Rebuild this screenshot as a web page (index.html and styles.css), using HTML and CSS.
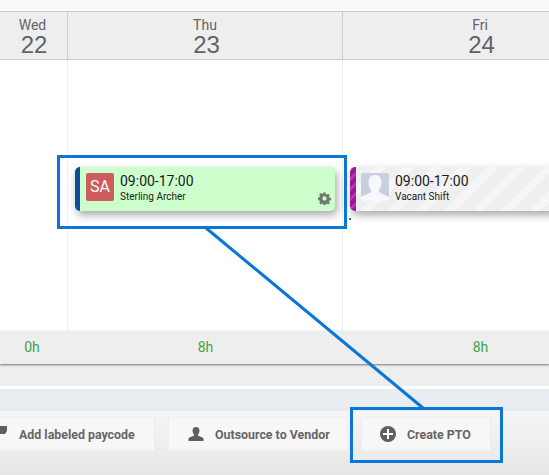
FILE: index.html
```html
<!DOCTYPE html>
<html lang="en">

<head>
  <meta charset="UTF-8">
  <title>Schedule</title>
  <link rel="stylesheet" href="styles.css">
</head>

<body>
  <div class="top-strip"></div>

  <!-- Day headers -->
  <div class="days">
    <div class="day day-wed"><span class="day-name">Wed</span><span class="day-num">22</span></div>
    <div class="day day-wide"><span class="day-name">Thu</span><span class="day-num">23</span></div>
    <div class="day day-wide"><span class="day-name">Fri</span><span class="day-num">24</span></div>
  </div>

  <!-- Shifts -->
  <div class="grid">
    <div class="cell cell-wed"><div class="prev-shift"></div></div>
    <div class="cell cell-wide">
      <div class="shift shift-green">
        <div class="avatar">SA</div>
        <div class="shift-text">
          <div class="shift-time">09:00-17:00</div>
          <div class="shift-name">Sterling Archer</div>
        </div>
        <svg class="gear" width="13" height="13" viewBox="0 0 14 14">
          <path fill="#6b7a69" fill-rule="evenodd" d="M5.8 0.6h2.4l.3 1.7 1.1.5 1.5-1 1.7 1.7-1 1.4.5 1.2 1.7.3v2.400l-1.7.3-.5 1.100 1 1.500-1.700 1.700-1.500-1-1.100.5-.3 1.700H5.8l-.3-1.700-1.100-.5-1.500 1-1.700-1.700 1-1.500-.5-1.100-1.700-.3V5.800l1.700-.3.5-1.200-1-1.400 1.700-1.700 1.500 1 1.100-.5zM7 4.700a2.300 2.300 0 1 0 0 4.600 2.300 2.300 0 0 0 0-4.600z"/>
        </svg>
      </div>
    </div>
    <div class="cell cell-wide">
      <div class="shift shift-vacant">
        <div class="avatar avatar-empty">
          <svg width="28" height="28" viewBox="0 0 28 28">
            <path fill="#fff" opacity="0.85" d="M14 2c4 0 6.500 3 6.500 7.500 0 3-1 5.500-2.500 7v2.500c1 1.500 6 2.500 10 5v4H0v-4c4-2.500 9-3.500 10-5v-2.500c-1.500-1.500-2.500-4-2.500-7C7.500 5 10 2 14 2z"/>
          </svg>
        </div>
        <div class="shift-text">
          <div class="shift-time">09:00-17:00</div>
          <div class="shift-name">Vacant Shift</div>
        </div>
      </div>
    </div>
  </div>

  <!-- Daily totals -->
  <div class="totals">
    <div class="total total-wed">0h</div>
    <div class="total total-wide">8h</div>
    <div class="total total-wide">8h</div>
  </div>

  <div class="spacer"></div>
  <div class="band"></div>

  <!-- Actions -->
  <div class="actions">
    <button class="action action-paycode">
      <svg class="action-icon" width="16" height="16" viewBox="0 0 16 16">
        <path fill="#5f5f5f" d="M0 0h16v5l-2 3H0z"/>
      </svg>
      Add labeled paycode
    </button>
    <button class="action action-vendor">
      <svg class="action-icon" width="16" height="14" viewBox="0 0 16 14">
        <path fill="#5f5f5f" d="M8 0c2.200 0 3.500 1.600 3.500 3.800 0 1.500-.6 2.800-1.500 3.600v1.200c.6.700 3.700 1.300 5.500 2.600V14H.5v-2.800C2.300 9.900 5.400 9.300 6 8.600V7.400C5.100 6.600 4.500 5.300 4.500 3.800 4.500 1.600 5.800 0 8 0z"/>
      </svg>
      Outsource to Vendor
    </button>
    <button class="action action-pto">
      <svg class="action-icon" width="16" height="16" viewBox="0 0 16 16">
        <circle cx="8" cy="8" r="8" fill="#5f5f5f"/>
        <path fill="#fff" d="M7 3h2v4h4v2H9v4H7V9H3V7h4z"/>
      </svg>
      Create PTO
    </button>
  </div>

  <!-- Annotation drawn over the screenshot -->
  <svg class="annotation" width="549" height="475" viewBox="0 0 549 475">
    <g fill="none" stroke="#0a76d8" stroke-width="3">
      <rect x="58.500" y="156.500" width="287" height="71"/>
      <rect x="351.500" y="408.500" width="150" height="53"/>
      <path d="M206 228L423 408"/>
    </g>
    <rect x="349" y="218" width="2" height="2" fill="#0a76d8"/>
  </svg>
</body>

</html>
```

FILE: styles.css
```css
html,
body {
  margin: 0;
  padding: 0;
  height: 100%;
  overflow: hidden;
}

body {
  position: relative;
  width: 549px;
  height: 475px;
  font-family: Roboto, "Liberation Sans", sans-serif;
  background-color: #eeeeee;
}

.top-strip {
  height: 11px;
  background-color: #f9f9f9;
}

/* Day headers */
.days {
  display: flex;
  height: 47px;
  background-color: #eeeeee;
  border-top: 1px solid #cccccc;
  border-bottom: 1px solid #cccccc;
}

.day {
  box-sizing: border-box;
  display: flex;
  flex-direction: column;
  align-items: center;
  flex-shrink: 0;
  border-right: 1px solid #cccccc;
  color: #5f6468;
  padding-top: 6px;
}

.day-wed {
  width: 68px;
  padding-right: 2px;
}

.day-wide {
  width: 275px;
}

.day-name {
  font-size: 14px;
  line-height: 15px;
}

.day-num {
  font-family: "Liberation Sans", sans-serif;
  font-size: 24px;
  line-height: 24px;
  padding-left: 3px;
}

/* Shift cells */
.grid {
  display: flex;
  height: 271px;
  background-color: #ffffff;
}

.cell {
  box-sizing: border-box;
  flex-shrink: 0;
  border-right: 1px solid #eeeeee;
  padding-top: 107px;
}

.cell-wed {
  width: 68px;
  position: relative;
  overflow: hidden;
}

.cell-wide {
  width: 275px;
  padding-left: 7px;
}

.prev-shift {
  width: 0;
  height: 44px;
  box-shadow: 0 3px 8px rgba(0, 0, 0, 0.15);
}

.shift {
  box-sizing: border-box;
  display: flex;
  width: 260px;
  height: 44px;
  padding: 6px 0 0 6px;
  position: relative;
  border-left: 5px solid;
  border-radius: 5px;
  box-shadow: 2px 4px 9px rgba(0, 0, 0, 0.35);
}

.shift-green {
  background-color: #ccffcc;
  border-left-color: #0b4f9c;
}

.shift-vacant {
  width: 275px;
  padding-left: 5px;
  border-left: 6px solid transparent;
  background-color: #f6f6f6;
  background-image: repeating-linear-gradient(-45deg, #f6f6f6 0, #f6f6f6 8px, #efefef 8px, #efefef 20px);
}

/* striped colour bar on the left of an open shift */
.shift-vacant::before {
  content: "";
  position: absolute;
  left: -6px;
  top: 0;
  bottom: 0;
  width: 6px;
  border-radius: 5px 0 0 5px;
  background-image: repeating-linear-gradient(-45deg, #a5129a 0, #a5129a 4px, #b03aa6 4px, #b03aa6 7px);
}

.avatar {
  width: 28px;
  height: 28px;
  border-radius: 2px;
  background-color: #cd5c5c;
  color: #ffffff;
  font-size: 16px;
  line-height: 28px;
  text-align: center;
}

.avatar-empty {
  background-color: #c8d0e0;
  overflow: hidden;
}

.avatar-empty svg {
  display: block;
}

.shift-text {
  margin-left: 6px;
  color: #1a1a1a;
}

.shift-time {
  font-size: 14px;
  line-height: 16px;
}

.shift-name {
  font-size: 10px;
  line-height: 14px;
  margin-top: 1px;
}

.gear {
  position: absolute;
  right: 4px;
  bottom: 6px;
}

/* Daily totals */
.totals {
  display: flex;
  height: 33px;
  background-color: #eeeeee;
  box-shadow: 0 1px 2px rgba(0, 0, 0, 0.5);
  position: relative;
}

.total {
  box-sizing: border-box;
  flex-shrink: 0;
  color: #43a343;
  font-size: 14px;
  line-height: 33px;
  text-align: center;
}

.total-wed {
  width: 68px;
  padding-right: 4px;
}

.total-wide {
  width: 275px;
}

.spacer {
  height: 22px;
}

.band {
  height: 22px;
  background-color: #e9edf2;
  border-top: 3px solid #ffffff;
}

/* Action buttons */
.actions {
  display: flex;
  height: 64px;
  padding-top: 6px;
  box-sizing: border-box;
  background: linear-gradient(#f6f6f6, #e6e6e6);
  margin-left: -20px;
}

.action {
  display: flex;
  align-items: center;
  flex-shrink: 0;
  height: 34px;
  margin-right: 13px;
  border: 1px solid #eeeeee;
  background-color: #f7f7f7;
  color: #666666;
  font-family: inherit;
  font-size: 12.4px;
  font-weight: 700;
  padding: 0;
}

.action-icon {
  flex-shrink: 0;
  margin-right: 11px;
}

.action-paycode {
  width: 175px;
  padding-left: 10px;
}

.action-paycode .action-icon {
  margin-right: 12px;
}

.action-vendor {
  width: 180px;
  padding-left: 19px;
}

.action-pto {
  width: 130px;
  padding-left: 18px;
}

/* Annotation */
.annotation {
  position: absolute;
  left: 0;
  top: 0;
}
```
